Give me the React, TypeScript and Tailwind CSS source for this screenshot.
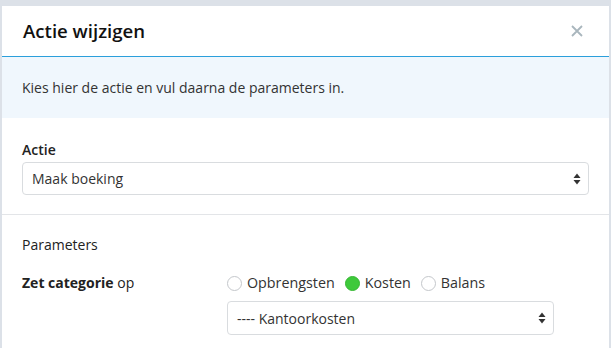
import React from "react";

function Arrows() {
  return (
    <svg width="8" height="12" viewBox="0 0 8 12" className="shrink-0">
      <path d="M4 0.5 L7.5 5 L0.5 5 Z" fill="#333" />
      <path d="M4 11.5 L7.5 7 L0.5 7 Z" fill="#333" />
    </svg>
  );
}

function Radio({ checked, label }: { checked?: boolean; label: string }) {
  return (
    <span className="flex items-center">
      {checked ? (
        <span className="w-[15px] h-[15px] rounded-full bg-[#3ec93b] border border-[#36b833]" />
      ) : (
        <span className="w-[15px] h-[15px] rounded-full bg-white border border-[#c4c7cb]" />
      )}
      <span className="ml-[5px]">{label}</span>
    </span>
  );
}

export default function App() {
  return (
    <div
      className="min-h-[348px] bg-[#dce1e8] pt-[6px] pl-[2px] pr-[2px] text-[14px] text-[#333]"
      style={{ fontFamily: '"Open Sans", "Noto Sans", sans-serif' }}
    >
      <div className="bg-white min-h-[342px]">
        <div className="h-[51px] flex items-center justify-between pl-[21px] pr-[26px] border-b border-[#2b9fdb]">
          <div className="text-[18.6px] font-semibold text-[#111]">Actie wijzigen</div>
          <svg width="12" height="12" viewBox="0 0 12 12">
            <path d="M1 1 L11 11 M11 1 L1 11" stroke="#a9b6bd" strokeWidth="1.8" />
          </svg>
        </div>
        <div className="h-[61px] bg-[#f0f7fd] px-[20px] flex items-center">
          Kies hier de actie en vul daarna de parameters in.
        </div>
        <div className="px-[20px] pt-[22px] pb-[19px] border-b border-[#e3e5e8]">
          <div className="font-semibold leading-[20px] text-[#222]">Actie</div>
          <div className="mt-[2px] h-[33px] border border-[#d9dcdf] rounded-[4px] flex items-center justify-between pl-[9px] pr-[7px]">
            <span>Maak boeking</span>
            <Arrows />
          </div>
        </div>
        <div className="px-[20px] pt-[20px]">
          <div className="leading-[20px] text-[#222]">Parameters</div>
          <div className="mt-[18px] flex">
            <div className="w-[205px] leading-[20px] text-[#222]">
              <span className="font-bold">Zet categorie</span> op
            </div>
            <div className="flex flex-col">
              <div className="flex items-center gap-[10px] leading-[20px] h-[20px] text-[14.3px]">
                <Radio label="Opbrengsten" />
                <Radio checked label="Kosten" />
                <Radio label="Balans" />
              </div>
              <div className="mt-[8px] w-[327px] h-[34px] border border-[#d9dcdf] rounded-[4px] flex items-center justify-between pl-[9px] pr-[7px]">
                <span>---- Kantoorkosten</span>
                <Arrows />
              </div>
            </div>
          </div>
        </div>
      </div>
    </div>
  );
}
